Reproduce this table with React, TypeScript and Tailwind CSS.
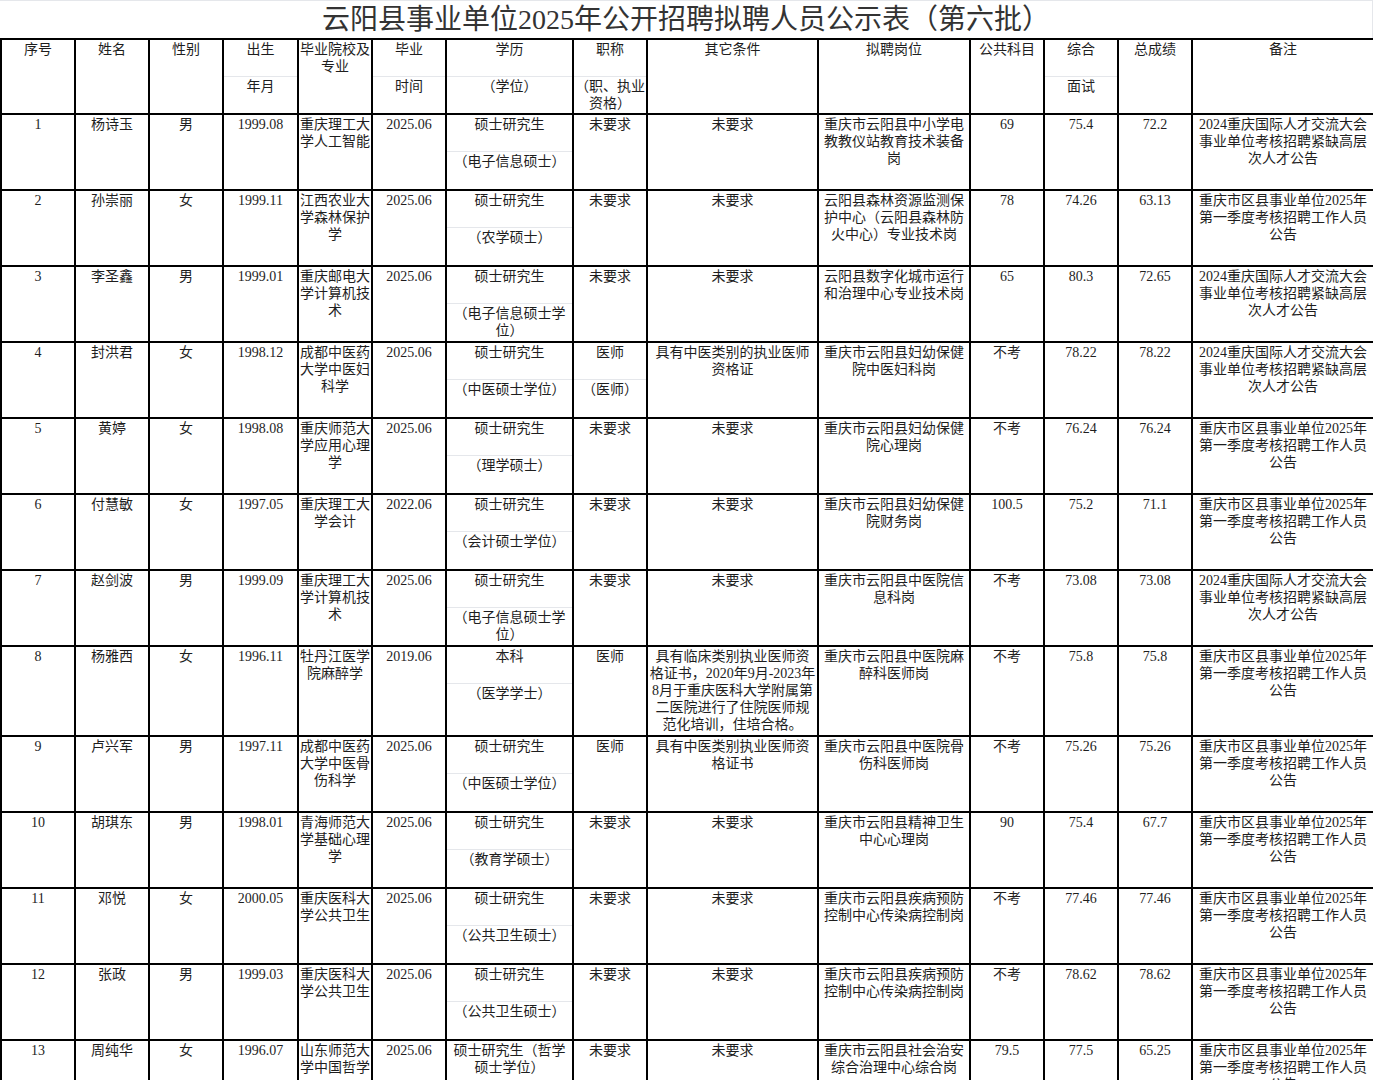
import React from "react";

type Row = {
  no: string;
  name: string;
  sex: string;
  birth: string;
  school: string;
  grad: string;
  edu: string[];
  title: string[];
  other: string;
  post: string;
  pub: string;
  interview: string;
  total: string;
  note: string;
  tall?: boolean;
};

const NOTE_A = "2024重庆国际人才交流大会事业单位考核招聘紧缺高层次人才公告";
const NOTE_B = "重庆市区县事业单位2025年第一季度考核招聘工作人员公告";

const rows: Row[] = [
  { no: "1", name: "杨诗玉", sex: "男", birth: "1999.08", school: "重庆理工大学人工智能", grad: "2025.06", edu: ["硕士研究生", "（电子信息硕士）"], title: ["未要求"], other: "未要求", post: "重庆市云阳县中小学电教教仪站教育技术装备岗", pub: "69", interview: "75.4", total: "72.2", note: NOTE_A },
  { no: "2", name: "孙崇丽", sex: "女", birth: "1999.11", school: "江西农业大学森林保护学", grad: "2025.06", edu: ["硕士研究生", "（农学硕士）"], title: ["未要求"], other: "未要求", post: "云阳县森林资源监测保护中心（云阳县森林防火中心）专业技术岗", pub: "78", interview: "74.26", total: "63.13", note: NOTE_B },
  { no: "3", name: "李圣鑫", sex: "男", birth: "1999.01", school: "重庆邮电大学计算机技术", grad: "2025.06", edu: ["硕士研究生", "（电子信息硕士学位）"], title: ["未要求"], other: "未要求", post: "云阳县数字化城市运行和治理中心专业技术岗", pub: "65", interview: "80.3", total: "72.65", note: NOTE_A },
  { no: "4", name: "封洪君", sex: "女", birth: "1998.12", school: "成都中医药大学中医妇科学", grad: "2025.06", edu: ["硕士研究生", "（中医硕士学位）"], title: ["医师", "（医师）"], other: "具有中医类别的执业医师资格证", post: "重庆市云阳县妇幼保健院中医妇科岗", pub: "不考", interview: "78.22", total: "78.22", note: NOTE_A },
  { no: "5", name: "黄婷", sex: "女", birth: "1998.08", school: "重庆师范大学应用心理学", grad: "2025.06", edu: ["硕士研究生", "（理学硕士）"], title: ["未要求"], other: "未要求", post: "重庆市云阳县妇幼保健院心理岗", pub: "不考", interview: "76.24", total: "76.24", note: NOTE_B },
  { no: "6", name: "付慧敏", sex: "女", birth: "1997.05", school: "重庆理工大学会计", grad: "2022.06", edu: ["硕士研究生", "（会计硕士学位）"], title: ["未要求"], other: "未要求", post: "重庆市云阳县妇幼保健院财务岗", pub: "100.5", interview: "75.2", total: "71.1", note: NOTE_B },
  { no: "7", name: "赵剑波", sex: "男", birth: "1999.09", school: "重庆理工大学计算机技术", grad: "2025.06", edu: ["硕士研究生", "（电子信息硕士学位）"], title: ["未要求"], other: "未要求", post: "重庆市云阳县中医院信息科岗", pub: "不考", interview: "73.08", total: "73.08", note: NOTE_A },
  { no: "8", name: "杨雅西", sex: "女", birth: "1996.11", school: "牡丹江医学院麻醉学", grad: "2019.06", edu: ["本科", "（医学学士）"], title: ["医师"], other: "具有临床类别执业医师资格证书，2020年9月-2023年8月于重庆医科大学附属第二医院进行了住院医师规范化培训，住培合格。", post: "重庆市云阳县中医院麻醉科医师岗", pub: "不考", interview: "75.8", total: "75.8", note: NOTE_B, tall: true },
  { no: "9", name: "卢兴军", sex: "男", birth: "1997.11", school: "成都中医药大学中医骨伤科学", grad: "2025.06", edu: ["硕士研究生", "（中医硕士学位）"], title: ["医师"], other: "具有中医类别执业医师资格证书", post: "重庆市云阳县中医院骨伤科医师岗", pub: "不考", interview: "75.26", total: "75.26", note: NOTE_B },
  { no: "10", name: "胡琪东", sex: "男", birth: "1998.01", school: "青海师范大学基础心理学", grad: "2025.06", edu: ["硕士研究生", "（教育学硕士）"], title: ["未要求"], other: "未要求", post: "重庆市云阳县精神卫生中心心理岗", pub: "90", interview: "75.4", total: "67.7", note: NOTE_B },
  { no: "11", name: "邓悦", sex: "女", birth: "2000.05", school: "重庆医科大学公共卫生", grad: "2025.06", edu: ["硕士研究生", "（公共卫生硕士）"], title: ["未要求"], other: "未要求", post: "重庆市云阳县疾病预防控制中心传染病控制岗", pub: "不考", interview: "77.46", total: "77.46", note: NOTE_B },
  { no: "12", name: "张政", sex: "男", birth: "1999.03", school: "重庆医科大学公共卫生", grad: "2025.06", edu: ["硕士研究生", "（公共卫生硕士）"], title: ["未要求"], other: "未要求", post: "重庆市云阳县疾病预防控制中心传染病控制岗", pub: "不考", interview: "78.62", total: "78.62", note: NOTE_B },
  { no: "13", name: "周纯华", sex: "女", birth: "1996.07", school: "山东师范大学中国哲学", grad: "2025.06", edu: ["硕士研究生（哲学硕士学位）"], title: ["未要求"], other: "未要求", post: "重庆市云阳县社会治安综合治理中心综合岗", pub: "79.5", interview: "77.5", total: "65.25", note: NOTE_B },
];

const widths = [74, 74, 74, 75, 74, 74, 127, 74, 171, 152, 74, 74, 74, 182];

const cellCls = "border-2 border-black p-0 align-top text-center";
const headCls = cellCls + " font-normal";

// one cell, optionally split in two halves with a faint line between
function Split({ parts }: { parts: string[] }) {
  if (parts.length < 2) {
    return <div className="pt-px">{parts[0]}</div>;
  }
  return (
    <div className="flex flex-col">
      <div className="h-[37px] border-b border-gray-200 pt-px">{parts[0]}</div>
      <div className="pt-px">{parts[1]}</div>
    </div>
  );
}

function Plain({ text }: { text: string }) {
  return <div className="pt-px">{text}</div>;
}

export default function App() {
  return (
    <div className="w-[1373px] bg-white text-[14px] leading-[17px] text-[#1e1e1e] font-['Liberation_Serif','Noto_Sans_CJK_SC',serif]">
      {/* Title */}
      <div className="h-[38px] border-t border-r border-gray-200 flex items-center justify-center text-[28px] leading-[32px] text-[#333]">
        云阳县事业单位2025年公开招聘拟聘人员公示表（第六批）
      </div>

      <table className="table-fixed border-collapse w-[1373px]">
        <colgroup>
          {widths.map((w, i) => (
            <col key={i} style={{ width: w }} />
          ))}
        </colgroup>
        <thead>
          <tr className="h-[75px]">
            <th className={headCls}><Plain text="序号" /></th>
            <th className={headCls}><Plain text="姓名" /></th>
            <th className={headCls}><Plain text="性别" /></th>
            <th className={headCls}><Split parts={["出生", "年月"]} /></th>
            <th className={headCls}><Plain text="毕业院校及专业" /></th>
            <th className={headCls}><Split parts={["毕业", "时间"]} /></th>
            <th className={headCls}><Split parts={["学历", "（学位）"]} /></th>
            <th className={headCls}><Split parts={["职称", "（职、执业资格）"]} /></th>
            <th className={headCls}><Plain text="其它条件" /></th>
            <th className={headCls}><Plain text="拟聘岗位" /></th>
            <th className={headCls}><Plain text="公共科目" /></th>
            <th className={headCls}><Split parts={["综合", "面试"]} /></th>
            <th className={headCls}><Plain text="总成绩" /></th>
            <th className={headCls}><Plain text="备注" /></th>
          </tr>
        </thead>
        <tbody>
          {rows.map((r) => (
            <tr key={r.no} className={r.tall ? "h-[90px]" : "h-[76px]"}>
              <td className={cellCls}><Plain text={r.no} /></td>
              <td className={cellCls}><Plain text={r.name} /></td>
              <td className={cellCls}><Plain text={r.sex} /></td>
              <td className={cellCls}><Plain text={r.birth} /></td>
              <td className={cellCls}><Plain text={r.school} /></td>
              <td className={cellCls}><Plain text={r.grad} /></td>
              <td className={cellCls}><Split parts={r.edu} /></td>
              <td className={cellCls}><Split parts={r.title} /></td>
              <td className={cellCls}><div className="px-px pt-px">{r.other}</div></td>
              <td className={cellCls}><div className="px-[4px] pt-px">{r.post}</div></td>
              <td className={cellCls}><Plain text={r.pub} /></td>
              <td className={cellCls}><Plain text={r.interview} /></td>
              <td className={cellCls}><Plain text={r.total} /></td>
              <td className={cellCls}><div className="px-[6px] pt-px">{r.note}</div></td>
            </tr>
          ))}
        </tbody>
      </table>
    </div>
  );
}
